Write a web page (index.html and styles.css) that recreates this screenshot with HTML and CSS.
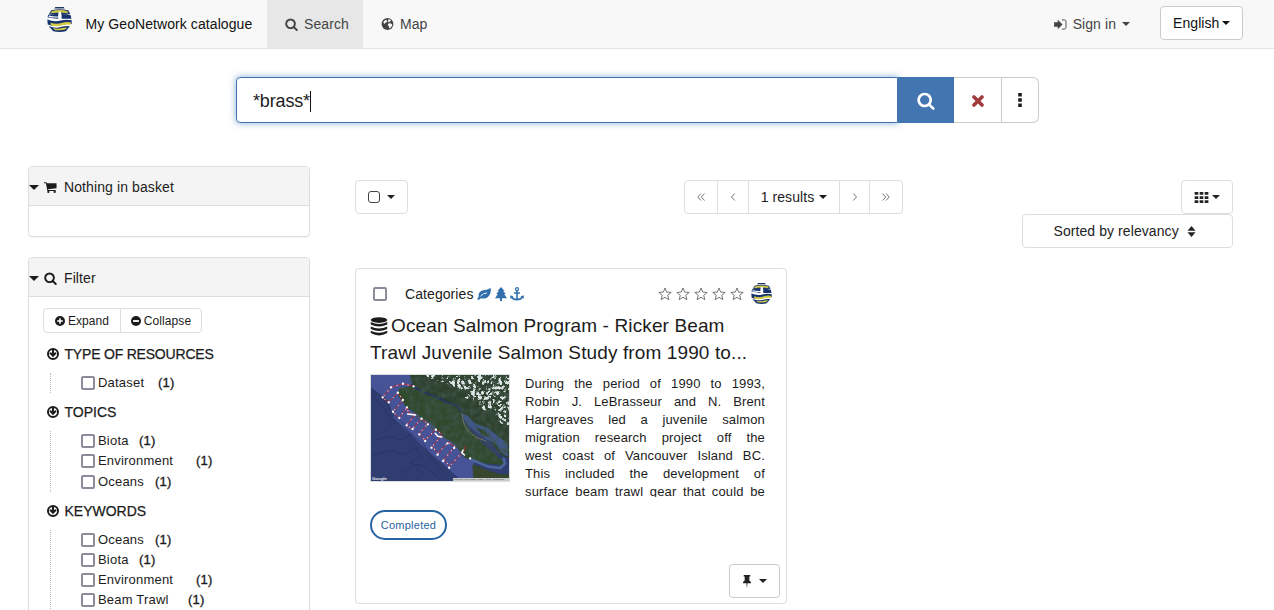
FILE: index.html
```
<!DOCTYPE html>
<html lang="en">
<head>
<meta charset="utf-8">
<title>My GeoNetwork catalogue</title>
<link rel="stylesheet" href="styles.css">
</head>
<body>
<svg class="sprite" aria-hidden="true">
  <symbol id="search" viewBox="64 64 1664 1728"><path d="M1216 832q0-185-131.500-316.500t-316.500-131.500-316.500 131.500-131.500 316.500 131.500 316.500 316.500 131.500 316.500-131.500 131.500-316.500zm512 832q0 52-38 90t-90 38q-54 0-90-38l-343-342q-179 124-399 124-143 0-273.500-55.500t-225-150-150-225-55.500-273.500 55.500-273.500 150-225 225-150 273.500-55.500 273.500 55.500 225 150 150 225 55.500 273.500q0 220-124 399l343 343q37 37 37 90z"/></symbol>
  <symbol id="logo" viewBox="0 0 24 24">
    <path fill="#fff" d="M2 5 7 1h11l4 4v14l-5 4H7l-5-4z"/>
    <path fill="#1c3463" d="M8 0h8l1 1.500H7z"/>
    <path fill="#26406c" d="M4 3.200Q12 1 20.500 3.200L22.500 7H1.800z"/>
    <path fill="#cfc64a" d="M4.500 4Q12 1.800 19.500 4l.8 2Q12 4.500 3.500 6z"/>
    <path fill="#17336f" d="M1.200 7.500Q6 6.300 11 6.700V11.300Q5 11 .5 9.800zM14 6.700q5 0 8.700 1.200l.8 3.400H14z"/>
    <path fill="#fff" d="M11 4.600h2.500v7H11zM2 8.200q5 1.300 9 .8v1Q6 10.500 1.500 9.500z"/>
    <path fill="#17336f" d="M.3 12Q7 14.600 13 13q6-1.400 10.700-.2v3.600q-5-.6-10 .9-7 2-13-.5z"/>
    <path fill="#d7cd43" d="M3.500 15.200Q9 17 14 15.400t9.200-.6l-.5 2.200q-5-.6-9 .8-6 1.700-10-.4z"/>
    <path fill="#17336f" d="M1.500 18.200Q8 21 14 19q4-1.300 8-.6l-4 4.800q-6 1.500-12 0z"/>
    <path fill="#d7cd43" d="M5.500 20.200q5 1.200 9 0 3-.8 5-.5l-2 2q-5 1-10 .3z"/>
  </symbol>
  <symbol id="globe" viewBox="0 0 14 14"><circle cx="7" cy="7" r="6.900"/><path fill="#f8f8f8" d="M2 5 4 2.500l2.300-.8-.7 1.300 1.300.8-1 1.200-1.300.5-1 1.600zM8 1.500l2.600.6.600 1.300-1.300.5-1 1.400-1.300-.8zM8 6.300l2.300-.2 2.200 1.100-.2 1.700-2 2.700-1.300.3-.4-2.600-1.400-.9z"/></symbol>
  <symbol id="signin" viewBox="0 0 14 12"><path d="M0 3.500h4V.7L9.200 6 4 11.300V8.500H0z"/><path fill="none" stroke="currentColor" stroke-width="1" d="M8.500 1h2.700q1.800 0 1.800 1.800v6.400q0 1.800-1.800 1.800H8.500"/></symbol>
  <symbol id="caret" viewBox="0 0 8 4"><path d="M0 0h8L4 4z"/></symbol>
  <symbol id="cart" viewBox="0 0 14 12"><path d="M0 .3h2.700l.4 1.200H13.500v5.200L4.400 7.800l.2.900h8v1.100H3.700L2 1.400H0z"/><circle cx="4.700" cy="10.800" r="1.200"/><circle cx="11.500" cy="10.800" r="1.200"/></symbol>
  <symbol id="plus" viewBox="0 0 12 12"><circle cx="6" cy="6" r="6"/><path fill="#fff" d="M5.100 2.600h1.800v2.500h2.500v1.800H6.900v2.500H5.100V6.900H2.600V5.100h2.500z"/></symbol>
  <symbol id="minus" viewBox="0 0 12 12"><circle cx="6" cy="6" r="6"/><path fill="#fff" d="M2.500 4.900h7v2.200h-7z"/></symbol>
  <symbol id="down" viewBox="0 0 12 12"><circle cx="6" cy="6" r="5" fill="#fff" stroke="currentColor" stroke-width="2"/><path d="M5 1.500h2v3.800l1.300-1.200 1.300 1.300L6 9.300 2.400 5.400l1.300-1.300L5 5.300z"/></symbol>
  <symbol id="star" viewBox="0 0 14 14"><path fill="none" stroke="currentColor" stroke-width=".9" stroke-linejoin="round" d="m7 1 1.700 4.100 4.500.3-3.500 2.900 1.200 4.400L7 10.300l-3.900 2.400 1.200-4.400L.8 5.400l4.500-.3z"/></symbol>
  <symbol id="leaf" viewBox="0 0 14 12"><path d="M13.600.1Q14.700 5.500 11 8.900 8 11.400 4 10.200L1.500 11.900.1 10.900 1.600 9Q1 4.300 5 2.600q5-.2 8.600-2.500z"/><path fill="none" stroke="#fff" stroke-width=".9" d="M3.500 8.200Q6 5.200 10 4.800"/></symbol>
  <symbol id="tree" viewBox="0 0 12 14"><path d="m6 0 3.500 3.700H8l2.800 3.300H9.200l2.800 4.300H7V14H5v-2.700H0L2.800 7H1.200L4 3.700H2.500z"/></symbol>
  <symbol id="anchor" viewBox="0 0 14 14"><path fill="none" stroke="currentColor" stroke-width="1.600" d="M7 4v8.500M4 6h6M1.400 9.700Q3 12.800 7 12.800t5.600-3.100"/><circle cx="7" cy="2.200" r="1.500" fill="none" stroke="currentColor" stroke-width="1.300"/><path d="m.2 8.200 3.200 1.200L.4 12zM13.800 8.200l-3.200 1.200 3 2.600z"/></symbol>
  <symbol id="database" viewBox="0 0 18 20"><ellipse cx="9" cy="3.200" rx="8.700" ry="3"/><path d="M.3 5.300Q9 9.400 17.700 5.300v2.600Q9 12.300.3 7.900zM.3 10Q9 14.100 17.700 10v2.600Q9 17 .3 12.600zM.3 14.600q8.700 4.100 17.400 0v2.300Q9 22 .3 16.900z"/></symbol>
  <symbol id="pin" viewBox="0 0 10 14"><path d="M1.500 0h7v1.500h-1V6Q9.500 7 9.500 9h-4l-.4 4.500h-.3L4.400 9H.5q0-2 2-3V1.500h-1z"/></symbol>
</svg>

<header class="topbar">
  <a class="brand"><svg class="brand-logo"><use href="#logo"/></svg><span>My GeoNetwork catalogue</span></a>
  <a class="nav active"><svg class="i14"><use href="#search"/></svg>Search</a>
  <a class="nav"><svg class="i13"><use href="#globe"/></svg>Map</a>
  <a class="signin"><svg><use href="#signin"/></svg>Sign in<svg class="caret"><use href="#caret"/></svg></a>
  <button class="btn language">English<svg class="caret"><use href="#caret"/></svg></button>
</header>

<form class="searchbar">
  <div class="query">*brass*<i class="cursor"></i></div>
  <div class="go"><svg><use href="#search"/></svg></div>
  <div class="clear"><svg viewBox="0 0 12 12"><path d="m2 2 8 8M10 2l-8 8"/></svg></div>
  <div class="more"><svg viewBox="0 0 4 14"><path d="M.2 0h3.600v3.600H.2zM.2 5.200h3.600v3.600H.2zM.2 10.400h3.600V14H.2z"/></svg></div>
</form>

<div class="columns">
  <aside class="sidebar">
    <section class="panel">
      <h2 class="panel-head"><svg class="toggle"><use href="#caret"/></svg><svg class="head-icon"><use href="#cart"/></svg>Nothing in basket</h2>
      <div class="basket"></div>
    </section>
    <section class="panel">
      <h2 class="panel-head"><svg class="toggle"><use href="#caret"/></svg><svg class="head-icon"><use href="#search"/></svg>Filter</h2>
      <div class="filters">
        <div class="group small">
          <span class="expand"><svg><use href="#plus"/></svg>Expand</span>
          <span class="collapse"><svg><use href="#minus"/></svg>Collapse</span>
        </div>
        <h3 class="types"><svg><use href="#down"/></svg>TYPE OF RESOURCES</h3>
        <ul>
          <li><i class="box"></i><span class="dataset">Dataset</span><b>(1)</b></li>
        </ul>
        <h3><svg><use href="#down"/></svg>TOPICS</h3>
        <ul>
          <li><i class="box"></i><span class="biota">Biota</span><b>(1)</b></li>
          <li><i class="box"></i><span class="environment">Environment</span><b>(1)</b></li>
          <li><i class="box"></i><span class="oceans">Oceans</span><b>(1)</b></li>
        </ul>
        <h3><svg><use href="#down"/></svg>KEYWORDS</h3>
        <ul>
          <li><i class="box"></i><span class="oceans">Oceans</span><b>(1)</b></li>
          <li><i class="box"></i><span class="biota">Biota</span><b>(1)</b></li>
          <li><i class="box"></i><span class="environment">Environment</span><b>(1)</b></li>
          <li><i class="box"></i><span class="beam">Beam Trawl</span><b>(1)</b></li>
        </ul>
      </div>
    </section>
  </aside>

  <main class="results">
    <div class="toolbar">
      <div class="btn select"><i></i><svg class="caret"><use href="#caret"/></svg></div>
      <div class="group pager">
        <span class="first"><svg viewBox="0 0 8 8"><path d="M4 .5.800 4 4 7.500M7.500.5 4.300 4l3.200 3.500"/></svg></span>
        <span class="prev"><svg viewBox="0 0 8 8"><path d="M5.700.5 2.500 4l3.200 3.500"/></svg></span>
        <span class="count">1 results<svg class="caret"><use href="#caret"/></svg></span>
        <span class="next"><svg viewBox="0 0 8 8"><path d="M2.300.5 5.500 4 2.300 7.500"/></svg></span>
        <span class="last"><svg viewBox="0 0 8 8"><path d="M.5.500 3.700 4 .500 7.500M4 .5 7.200 4 4 7.500"/></svg></span>
      </div>
      <div class="view">
        <div class="btn grid"><svg class="cells" viewBox="0 0 15 12"><path d="M0 0h4v3H0zM5.500 0h4v3h-4zM11 0h4v3h-4zM0 4.500h4v3H0zM5.500 4.500h4v3h-4zM11 4.500h4v3h-4zM0 9h4v3H0zM5.500 9h4v3h-4zM11 9h4v3h-4z"/></svg><svg class="caret"><use href="#caret"/></svg></div>
        <div class="btn sort">Sorted by relevancy<svg class="updown" viewBox="0 0 8 11"><path d="M0 4.700 4 0l4 4.700zM0 6.300h8L4 11z"/></svg></div>
      </div>
    </div>

    <article class="card">
      <div class="card-head">
        <i class="box"></i><span class="cat">Categories</span>
        <svg class="leaf"><use href="#leaf"/></svg><svg class="tree"><use href="#tree"/></svg><svg class="anchor"><use href="#anchor"/></svg>
        <div class="stars"><svg><use href="#star"/></svg><svg><use href="#star"/></svg><svg><use href="#star"/></svg><svg><use href="#star"/></svg><svg><use href="#star"/></svg></div>
        <svg class="card-logo"><use href="#logo"/></svg>
      </div>
      <h1><span class="t1"><svg><use href="#database"/></svg>Ocean Salmon Program - Ricker Beam</span><span class="t2">Trawl Juvenile Salmon Study from 1990 to...</span></h1>
      <div class="card-body">
        <svg class="map" viewBox="20 15 415 318" preserveAspectRatio="none">
          <defs>
            <filter id="terrain" x="0" y="0" width="1" height="1"><feTurbulence type="fractalNoise" baseFrequency=".06" numOctaves="3" seed="4"/><feColorMatrix values="0 0 0 0 .05  0 0 0 0 .09  0 0 0 0 .07  2 0 0 0 -.75"/><feComposite operator="in" in2="SourceGraphic"/></filter>
            <filter id="snow" x="0" y="0" width="1" height="1"><feTurbulence type="turbulence" baseFrequency=".065" numOctaves="3" seed="8"/><feColorMatrix values="0 0 0 0 .72  0 0 0 0 .78  0 0 0 0 .78  6 0 0 0 -1.800"/><feComposite operator="in" in2="SourceGraphic"/></filter>
          </defs>
          <path fill="#303d70" d="M20 15h415v318H20z"/>
          <path fill="#465397" d="M20 15h120l20 75 130 150 40 28v65h-35q-70-60-130-115L90 145l-20-55-50-37z"/>
          <path fill="none" stroke="#252f61" stroke-width="3" opacity=".65" d="m22 55 40 30 20 45 30 25 25 35 40 30 25 45 45 50M25 75l35 45 35 40-20 5M25 255l60-15 35 15 35-25 15 30-35 20 50 10 35 30M30 210l45-10 35 10 35-20M110 310l35-22 40 28"/>
          <path fill="#2e412d" d="M137 15h298v250l-25-10-35-45-36-24-28-38-15-7-10-14-90-30-50-50z"/>
          <path fill="#304a2e" d="m104 56 50-12 45 35 55 15 33 34 14 34 46 50 52 47 20 17-5 9-49-5-62-16-32-43-32-20-34-37-45-30-36-25-22-32z"/>
          <path fill="#37462d" d="m325 283 45 17 35 12 30 1v20H328z"/>
          <path fill="none" stroke="#23365c" stroke-width="7" d="m140 44 35 22 35 12 41 20 30 9 11 20"/>
          <path fill="#40578c" d="m292 130 20 8 18 20 18 8 25 8 25 22 32 24 2 40-20-11-15-26-32-16-25-18-31-26-15-28z"/>
          <path fill="#2e412d" d="m335 172 28 10 14 20-22-6z"/>
          <path fill="none" stroke="#4c6599" stroke-width="8" d="m318 267 55 23 36 4 14-14-5-17"/>
          <path filter="url(#terrain)" d="M108 52 145 20l290-5v225l-23 35-112-12-70-65-72-51z"/>
          <path filter="url(#snow)" d="M180 15h255v157l-25-12-20-31-32-10-20-25-34-9-23-30-54-22-47-12z"/>
          <path fill="none" stroke="#a09969" stroke-width="2" opacity=".8" d="m292 128 9 37 10 16 22 20 36 13"/>
          <path fill="none" stroke="#b02a3c" stroke-width="3" d="m148 49-32-8-36 11-25 30 18 15 28-29 15 22-30 35 19 19 23-32 6 20 20 1-28 33 18 11 27-31 20 15-26 30 18 20 32-34 19 17-30 36 18 20 30-34 20 14-33 39 18 19 43-47 5-13"/>
          <path fill="none" stroke="#f0c5cb" stroke-width="4" stroke-linecap="round" stroke-dasharray="0 17" d="m148 49-32-8-36 11-25 30 18 15 28-29 15 22-30 35 19 19 23-32 6 20 20 1-28 33 18 11 27-31 20 15-26 30 18 20 32-34 19 17-30 36 18 20 30-34 20 14-33 39 18 19 43-47"/>
          <path fill="none" stroke="#fff" stroke-width="7" stroke-linecap="round" d="M148 49h.1M116 41h.1M80 52h.1M55 82h.1M73 97h.1M101 68h.1M116 90h.1M86 125h.1M105 144h.1M128 112h.1M127 166h.1M145 177h.1M172 146h.1M191 163h.1M165 193h.1M183 213h.1M215 179h.1M202 233h.1M220 254h.1M250 220h.1M270 234h.1M237 273h.1M255 293h.1M318 265h.1"/>
          <path fill="none" stroke="#fff" stroke-width="4.500" stroke-linecap="round" d="m130 132 24 3M213 190l8 9 12 2M297 240l-4 8 8 7"/>
          <text x="23" y="329" class="google">Google</text>
          <path fill="#c8ccce" d="M267 324h168v9H267z"/><text x="271" y="331" class="credit">Map data ©2019 Google Imagery ©2019 , TerraMetrics</text>
        </svg>
        <div class="abstract"><p>During the period of 1990 to 1993,</p><p>Robin J. LeBrasseur and N. Brent</p><p>Hargreaves led a juvenile salmon</p><p>migration research project off the</p><p>west coast of Vancouver Island BC.</p><p>This included the development of</p><p>surface beam trawl gear that could be</p></div>
      </div>
      <span class="status">Completed</span>
      <div class="btn pinbtn"><svg class="pin"><use href="#pin"/></svg><svg class="caret"><use href="#caret"/></svg></div>
    </article>
  </main>
</div>
</body>
</html>
```
FILE: styles.css
```
* { box-sizing: border-box; }
html, body { height: 100%; overflow: hidden; }
body { margin: 0; background: #fff; color: #1c1c1c; font: 14px/20px "Liberation Sans", Arial, sans-serif; letter-spacing: .08px; }
svg { display: block; flex: none; fill: currentColor; }
.sprite { position: absolute; width: 0; height: 0; }
h1, h2, h3, ul, p { margin: 0; padding: 0; font-weight: 400; }
.caret { width: 8px; height: 4px; }
.btn { display: flex; align-items: center; height: 34px; border: 1px solid #ddd; border-radius: 4px; background: #fff; color: #222; font: inherit; letter-spacing: inherit; }
.group { display: flex; border: 1px solid #ddd; border-radius: 4px; }
.group span { display: flex; align-items: center; justify-content: center; }
.group span + span { border-left: 1px solid #ddd; }
.box { flex: none; width: 14px; height: 14px; border: 2px solid #8d8b9b; border-radius: 2px; }

.topbar { display: flex; align-items: center; height: 49px; padding-right: 31px; background: #f8f8f8; border-bottom: 1px solid #e4e4e4; color: #444; }
.brand { display: flex; align-items: center; width: 267px; padding-left: 47px; color: #111; white-space: nowrap; }
.brand-logo { width: 25px; height: 25px; margin: -10px 13.500px 0 0; }
.nav { display: flex; align-items: center; height: 48px; padding: 0 15px 0 18px; gap: 6px; }
.nav.active { width: 96px; background: #e7e7e7; }
.i14 { width: 13px; height: 13px; }
.i13 { width: 13px; height: 12px; }
.signin { display: flex; align-items: center; margin-left: auto; margin-right: 30px; }
.signin svg:first-child { width: 13px; height: 11px; margin-right: 6px; }
.signin .caret { margin-left: 6px; }
.language { width: 83px; padding: 0 0 0 12px; margin-top: -2px; border-color: #ccc; color: #111; }
.language .caret { margin-left: 3px; }

.searchbar { display: flex; width: 803px; height: 46px; margin: 28px 0 0 236px; }
.query { display: flex; align-items: center; width: 662px; padding: 2px 0 0 16px; border: 1px solid #4275ae; border-radius: 4px 0 0 4px; box-shadow: 0 0 7px rgba(66, 130, 190, .65); font-size: 18px; letter-spacing: -.15px; }
.cursor { width: 1px; height: 21px; background: #111; }
.go, .clear, .more { display: flex; align-items: center; justify-content: center; padding-top: 1px; }
.go { z-index: 1; width: 56px; background: #4375b1; color: #fff; }
.go svg { width: 18px; height: 18px; }
.clear { width: 48px; border: solid #ccc; border-width: 1px 1px 1px 0; }
.clear svg { width: 12px; height: 12px; fill: none; stroke: #a33d3d; stroke-width: 3.600; stroke-linecap: round; }
.more { width: 37px; padding-top: 0; border: solid #ccc; border-width: 1px 1px 1px 0; border-radius: 0 6px 6px 0; }
.more svg { width: 4px; height: 14px; }

.columns { display: flex; padding: 43px 42px 0 28px; }
.sidebar { width: 282px; }
.panel { margin-bottom: 20px; border: 1px solid #ddd; border-radius: 4px; box-shadow: 0 1px 1px rgba(0, 0, 0, .05); }
.panel-head { display: flex; align-items: center; height: 39px; padding-top: 2px; border-bottom: 1px solid #ddd; border-radius: 3px 3px 0 0; background: #f4f4f4; font-size: 14px; letter-spacing: .1px; }
.toggle { width: 10px; height: 5px; margin-right: 5px; }
.head-icon { width: 13px; height: 13px; margin-right: 7px; }
.basket { height: 30px; }
.filters { padding: 11px 14px; }
.small { width: 159px; height: 25px; margin-bottom: 11px; font-size: 12px; }
.small svg { width: 10px; height: 10px; margin-right: 3px; }
.expand { width: 76px; }
.collapse { flex: 1; }
h3 { display: flex; align-items: center; height: 20px; padding-left: 3.500px; font-size: 14px; font-weight: 400; letter-spacing: 0; -webkit-text-stroke: .25px; }
.types { letter-spacing: -.2px; }
h3 svg { width: 12px; height: 12px; margin-right: 6px; }
ul { margin: 9px 0 9px 7px; padding-left: 29.500px; border-left: 1px dotted #bbb; list-style: none; }
li { display: flex; align-items: center; height: 20.200px; font-size: 13px; letter-spacing: .2px; white-space: nowrap; }
li .box { margin-right: 3.500px; }
li b { font-weight: 400; -webkit-text-stroke: .35px; }
.dataset { width: 60px; }
.biota { width: 41px; }
.environment { width: 98px; }
.oceans { width: 57px; }
.beam { width: 90px; }

.results { width: 877px; margin: 14px 0 0 45px; }
.toolbar { display: flex; height: 88px; }
.select { width: 53px; padding-left: 12px; }
.select i { width: 12px; height: 12px; margin-right: 7px; border: 1px solid #444; border-radius: 3px; }
.pager { width: 219px; height: 34px; margin-left: 276px; }
.pager svg:not(.caret) { width: 8px; height: 8px; fill: none; stroke: #777; stroke-width: 1; }
.first { width: 32px; }
.prev { width: 31px; }
.count { width: 91px; }
.count .caret { margin-left: 5px; }
.next { width: 30px; }
.last { flex: 1; }
.view { display: flex; flex-direction: column; align-items: flex-end; margin-left: auto; margin-right: -.5px; }
.grid { width: 52px; padding-left: 12px; }
.cells { width: 15px; height: 11px; margin-right: 3px; }
.sort { width: 211px; padding-left: 31px; }
.updown { width: 9px; height: 11px; margin-left: 8px; }

.card { display: flex; flex-direction: column; width: 432px; height: 336px; padding: 0 6px 5px 14px; border: 1px solid #ddd; border-radius: 4px; }
.card-head { display: flex; align-items: center; height: 22px; margin-top: 14px; padding-left: 3px; }
.cat { margin: 0 3px 0 18px; }
.leaf, .tree, .anchor { color: #3170ad; }
.leaf { width: 14px; height: 12px; margin-right: 4px; }
.tree { width: 12px; height: 14px; margin-right: 3px; }
.anchor { width: 14px; height: 14px; }
.stars { display: flex; gap: 4px; margin-left: auto; color: #666; }
.stars svg { width: 14px; height: 14px; }
.card-logo { width: 21px; height: 21px; margin: -2px 8px 0 7px; }
h1 { margin-top: 8px; font-size: 19px; line-height: 26.500px; white-space: nowrap; }
h1 span { display: flex; align-items: center; }
h1 svg { width: 18px; height: 19px; margin-right: 3px; }
.t1, .t2 { letter-spacing: .12px; }
.card-body { display: flex; height: 124px; margin-top: 8px; }
.map { width: 140px; height: 108px; margin: 0 15px 0 0; padding: 0; border: 1px solid #ddd; }
.google { fill: #e7e7ee; font: bold 13px "Liberation Sans", Arial, sans-serif; }
.credit { fill: #444; font: 6px "Liberation Sans", Arial, sans-serif; }
.abstract { width: 240px; height: 123px; padding-top: 1px; overflow: hidden; font-size: 13px; line-height: 18px; letter-spacing: .15px; }
.abstract p { text-align: justify; text-align-last: justify; white-space: nowrap; }
.status { width: 77px; height: 30px; margin-top: 12px; border: 2px solid #2863a3; border-radius: 15px; color: #2863a3; font-size: 11px; line-height: 26px; text-align: center; letter-spacing: .25px; }
.pinbtn { width: 51px; margin: auto 0 0 auto; padding-left: 12px; border-color: #ccc; }
.pin { width: 10px; height: 13px; margin-right: 7px; }
```
